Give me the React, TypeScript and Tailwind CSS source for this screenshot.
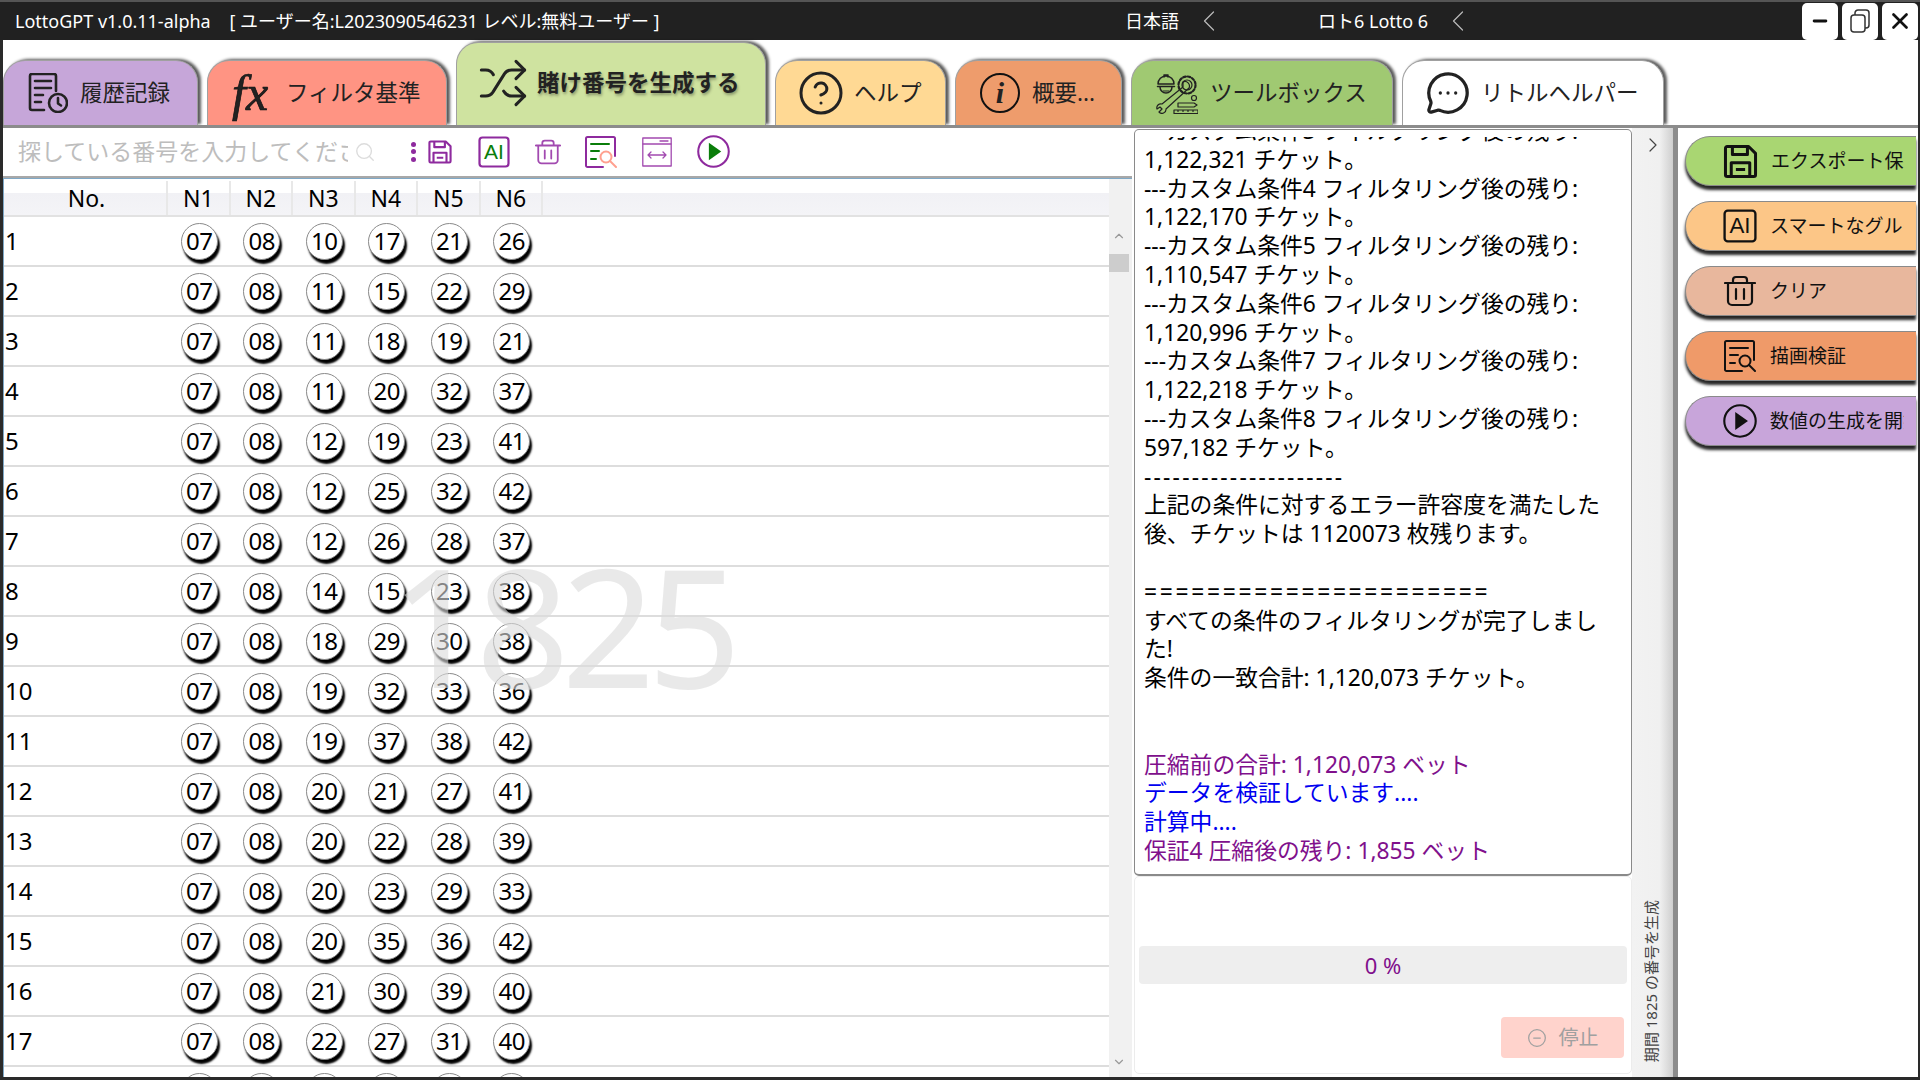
// LottoGPT ticket generator window.
import { ChevronLeft, ChevronRight, ChevronUp, ChevronDown, CircleHelp, MessageCircleMore, Minus, MinusCircle, Search, Shuffle, X } from 'lucide-react'

const ROWS = [
  ['07', '08', '10', '17', '21', '26'],
  ['07', '08', '11', '15', '22', '29'],
  ['07', '08', '11', '18', '19', '21'],
  ['07', '08', '11', '20', '32', '37'],
  ['07', '08', '12', '19', '23', '41'],
  ['07', '08', '12', '25', '32', '42'],
  ['07', '08', '12', '26', '28', '37'],
  ['07', '08', '14', '15', '23', '38'],
  ['07', '08', '18', '29', '30', '38'],
  ['07', '08', '19', '32', '33', '36'],
  ['07', '08', '19', '37', '38', '42'],
  ['07', '08', '20', '21', '27', '41'],
  ['07', '08', '20', '22', '28', '39'],
  ['07', '08', '20', '23', '29', '33'],
  ['07', '08', '20', '35', '36', '42'],
  ['07', '08', '21', '30', '39', '40'],
  ['07', '08', '22', '27', '31', '40'],
  ['07', '08', '22', '27', '32', '33'],
]

const LOG: [string, string?][] = [
  ['---カスタム条件3 フィルタリング後の残り:'],
  ['1,122,321 チケット。'],
  ['---カスタム条件4 フィルタリング後の残り:'],
  ['1,122,170 チケット。'],
  ['---カスタム条件5 フィルタリング後の残り:'],
  ['1,110,547 チケット。'],
  ['---カスタム条件6 フィルタリング後の残り:'],
  ['1,120,996 チケット。'],
  ['---カスタム条件7 フィルタリング後の残り:'],
  ['1,122,218 チケット。'],
  ['---カスタム条件8 フィルタリング後の残り:'],
  ['597,182 チケット。'],
  ['---------------------', 'tracking-[2.200px]'],
  ['上記の条件に対するエラー許容度を満たした'],
  ['後、チケットは 1120073 枚残ります。'],
  ['\u00a0'],
  ['======================', 'tracking-[2.700px]'],
  ['すべての条件のフィルタリングが完了しまし'],
  ['た!'],
  ['条件の一致合計: 1,120,073 チケット。'],
  ['\u00a0'],
  ['\u00a0'],
  ['圧縮前の合計: 1,120,073 ベット', 'text-[#80108c]'],
  ['データを検証しています....', 'text-[#0000f0]'],
  ['計算中....', 'text-[#0000f0]'],
  ['保証4 圧縮後の残り: 1,855 ベット', 'text-[#80108c]'],
]

function SaveIcon({ className }: { className?: string }) {
  return (
    <svg viewBox="0 0 32 32" fill="none" stroke="currentColor" strokeWidth="2.6" strokeLinejoin="round" className={className}>
      <path d="M3 4.5A1.5 1.5 0 0 1 4.5 3H23l6 6v18.5a1.5 1.5 0 0 1-1.5 1.5h-23A1.5 1.5 0 0 1 3 27.5z" />
      <path d="M9 3v7h13V3M8 29V17h16v12M12 23h8" />
    </svg>
  )
}

function AiIcon({ className, accent }: { className?: string; accent?: string }) {
  return (
    <svg viewBox="0 0 32 32" fill="none" className={className}>
      <rect x="1.5" y="1.5" width="29" height="29" rx="3" stroke="currentColor" strokeWidth="2.2" />
      <text x="16" y="23" textAnchor="middle" fontSize="21" fontFamily="Liberation Sans" fill={accent ?? 'currentColor'}>AI</text>
    </svg>
  )
}

function TrashIcon({ className }: { className?: string }) {
  return (
    <svg viewBox="0 0 32 32" fill="none" stroke="currentColor" strokeWidth="2.2" strokeLinecap="round" strokeLinejoin="round" className={className}>
      <path d="M1 8h30M9 8V5a3 3 0 0 1 3-3h8a3 3 0 0 1 3 3v3M4 8v18a4 4 0 0 0 4 4h16a4 4 0 0 0 4-4V8M12 14v10M20 14v10" />
    </svg>
  )
}

function ReportIcon({ className, accent, lens }: { className?: string; accent?: string; lens?: string }) {
  return (
    <svg viewBox="0 0 32 32" fill="none" strokeWidth="2" strokeLinecap="round" className={className}>
      <path d="M30 20V2.5A1.5 1.5 0 0 0 28.500 1H2.500A1.500 1.500 0 0 0 1 2.500v27A1.500 1.500 0 0 0 2.500 31H18" stroke="currentColor" />
      <path d="M6 8h18M6 15h8M6 23h5" stroke={accent ?? 'currentColor'} />
      <circle cx="21" cy="21" r="5.500" stroke={lens ?? 'currentColor'} />
      <path d="M25 25l6 6" stroke={lens ?? 'currentColor'} />
    </svg>
  )
}

function PlayIcon({ className, accent }: { className?: string; accent?: string }) {
  return (
    <svg viewBox="0 0 32 32" fill="none" className={className}>
      <circle cx="16" cy="16" r="14.800" stroke="currentColor" strokeWidth="2" />
      <path d="M11.500 7.500v17l12-8.500z" fill={accent ?? 'currentColor'} />
    </svg>
  )
}

function WidthIcon({ className }: { className?: string }) {
  return (
    <svg viewBox="0 0 30 30" fill="none" stroke="currentColor" strokeWidth="1.300" strokeLinecap="round" strokeLinejoin="round" className={className}>
      <rect x="0.800" y="1" width="28.400" height="28" />
      <path d="M1 7h28M18 4h8M6 18h18M9 15l-3 3 3 3M21 15l3 3-3 3" />
    </svg>
  )
}

function HistoryIcon() {
  return (
    <svg viewBox="0 0 40 40" fill="none" stroke="currentColor" strokeWidth="2.600" strokeLinecap="round" strokeLinejoin="round" className="h-[40px] w-[40px] shrink-0">
      <path d="M16 37H4a2 2 0 0 1-2-2V3a2 2 0 0 1 2-2h22a2 2 0 0 1 2 2v15" />
      <path d="M7 8h16M7 15h16M7 22h8M7 29h6" />
      <circle cx="30" cy="30" r="9" />
      <path d="M30 25v5.500l3 2" />
    </svg>
  )
}

// worker's helmet, spanner through a gear, pen and ruler
function ToolsIcon() {
  return (
    <svg viewBox="0 0 42 42" fill="none" stroke="currentColor" strokeWidth="1.200" strokeLinecap="round" strokeLinejoin="round" className="h-[42px] w-[42px] shrink-0">
      <path d="M2 12a8 8 0 0 1 16 0zM8 5V3h4v2M1.500 14.500h17M4 15a6 6 0 0 0 12 0" strokeWidth="1.500" />
      <path d="M7 19h6" />
      <circle cx="31" cy="13" r="8.500" strokeDasharray="2.500 2" strokeWidth="2.200" />
      <circle cx="31" cy="13" r="5" />
      <path d="M27 10a4.500 4.500 0 0 1 6 6L10 37a4 4 0 0 1-7 3l3-3-2-2-3 2a4 4 0 0 1 5-5l21-17z" />
      <circle cx="38" cy="26" r="2.500" />
      <path d="M22 31h16l3 2-3 2H22zM18 38h24v3.500H18zM22 38v1.500M27 38v1.500M32 38v1.500M37 38v1.500" />
    </svg>
  )
}

function Ball({ value }: { value: string }) {
  return (
    <div className="flex h-[37px] w-[37px] items-center justify-center rounded-full border border-[#8a8a8a] bg-white text-[24px] leading-none tracking-[-0.5px] shadow-[2px_4px_2px_#000]">
      {value}
    </div>
  )
}

function Tab({ width, color, active, icon, label }: { width: string; color: string; active?: boolean; icon: React.ReactNode; label: string }) {
  return (
    <div
      className={`flex ${width} ${color} ${active ? 'h-[83px] pb-[3px] font-bold [text-shadow:1px_2px_3px_rgba(0,0,0,0.35)]' : 'h-[65px] pb-[1px]'} shrink-0 items-center gap-[12px] rounded-t-[22px] border border-b-0 border-[#a0a0a0] pl-[24px] text-[22.500px] text-[#222] shadow-[3px_-1px_3px_rgba(0,0,0,0.65)]`}
    >
      {icon}
      <span className="whitespace-nowrap">{label}</span>
    </div>
  )
}

function SideButton({ color, icon, label }: { color: string; icon: React.ReactNode; label: string }) {
  return (
    <div className={`flex h-[50px] ${color} items-center gap-[14px] rounded-l-[25px] border border-r-0 border-[#8a8a8a] pl-[38px] pr-[12px] text-[19px] text-[#111] shadow-[0_4px_3px_rgba(0,0,0,0.85)]`}>
      {icon}
      <span className="overflow-hidden whitespace-nowrap">{label}</span>
    </div>
  )
}

function WindowButton({ children }: { children: React.ReactNode }) {
  return <div className="flex h-[37px] w-[36px] items-center justify-center rounded-[5px] bg-white text-[#111]">{children}</div>
}

export default function App() {
  return (
    <div className="flex h-[1080px] w-[1920px] flex-col overflow-hidden bg-[#2a2a2a] pb-[3px] pl-[3px] pr-[2px] font-['Noto_Sans','Noto_Sans_CJK_JP',sans-serif] text-black">
      {/* title bar */}
      <div className="-ml-[3px] -mr-[2px] flex h-[40px] shrink-0 items-center justify-between border-t-2 border-[#555] bg-[#212121] pl-[15px] pr-[2px] text-[18px] text-white">
        <div className="w-[1110px] whitespace-pre">LottoGPT v1.0.11-alpha    [ ユーザー名:L2023090546231 レベル:無料ユーザー ]</div>
        <div className="flex w-[155px] items-center gap-[12px]">
          <span>日本語</span>
          <ChevronLeft size={36} strokeWidth={0.800} className="text-[#bbb]" />
        </div>
        <div className="ml-[38px] flex w-[200px] items-center gap-[12px]">
          <span>ロト6 Lotto 6</span>
          <ChevronLeft size={36} strokeWidth={0.800} className="text-[#bbb]" />
        </div>
        <div className="ml-auto flex items-center gap-[4px]">
          <WindowButton><Minus size={20} strokeWidth={3.500} /></WindowButton>
          <WindowButton>
            <svg viewBox="0 0 22 24" fill="none" stroke="#333" strokeWidth="1.500" className="h-[24px] w-[22px]">
              <rect x="2" y="6" width="14" height="17" rx="3" />
              <path d="M6 6V4a3 3 0 0 1 3-3h8a3 3 0 0 1 3 3v12a3 3 0 0 1-3 3h-1" />
            </svg>
          </WindowButton>
          <WindowButton><X size={26} strokeWidth={2.500} /></WindowButton>
        </div>
      </div>

      {/* tabs */}
      <div className="flex h-[85px] shrink-0 items-end gap-[9px] bg-white">
        <Tab width="w-[195px]" color="bg-[#c6a6d9]" icon={<HistoryIcon />} label="履歴記録" />
        <Tab width="w-[240px]" color="bg-[#ff9483]" icon={<span className="w-[42px] font-['Liberation_Serif',serif] text-[50px] italic leading-none [-webkit-text-stroke:0.700px_#111]">fx</span>} label="フィルタ基準" />
        <Tab width="w-[310px]" color="bg-[#cfe3a0]" active icon={<Shuffle size={52} strokeWidth={1.400} className="-mx-[4px] shrink-0" />} label="賭け番号を生成する" />
        <Tab width="w-[171px]" color="bg-[#ffd994]" icon={<CircleHelp size={48} strokeWidth={1.500} className="-mx-[3px] shrink-0" />} label="ヘルプ" />
        <Tab width="w-[167px]" color="bg-[#ee9c6c]" icon={<span className="flex h-[40px] w-[40px] items-center justify-center rounded-full border-2 border-[#111] font-['Liberation_Serif',serif] text-[30px] font-bold italic leading-none">i</span>} label="概要..." />
        <Tab width="w-[262px]" color="bg-[#a0c972]" icon={<ToolsIcon />} label="ツールボックス" />
        <Tab width="w-[262px]" color="bg-white" icon={<MessageCircleMore size={46} strokeWidth={1.700} className="-mx-[2px] shrink-0" />} label="リトルヘルパー" />
      </div>

      {/* body */}
      <div className="flex min-h-0 flex-1 border-t-[3px] border-[#8c8c8c] bg-white">
        {/* left: search + table */}
        <div className="flex w-[1129px] shrink-0 flex-col">
          <div className="flex h-[50px] shrink-0 items-center border-b-2 border-[#a8a8a8] pb-[1px] pl-[15px]">
            <div className="w-[330px] overflow-hidden whitespace-nowrap text-[23px] text-[#bdbdbd]">探している番号を入力してください</div>
            <Search size={22} strokeWidth={1.500} className="ml-[6px] text-[#dcdcdc]" />
            <div className="ml-[35px] flex h-[20px] flex-col justify-between">
              <span className="h-[5px] w-[5px] rounded-full bg-[#8e2a9e]" />
              <span className="h-[5px] w-[5px] rounded-full bg-[#8e2a9e]" />
              <span className="h-[5px] w-[5px] rounded-full bg-[#8e2a9e]" />
            </div>
            <SaveIcon className="ml-[11px] h-[26px] w-[26px] text-[#8e2a9e]" />
            <AiIcon className="ml-[25px] h-[32px] w-[32px] text-[#8e2a9e]" accent="#0a7d0a" />
            <TrashIcon className="ml-[25px] h-[26px] w-[26px] text-[#a24ab0]" />
            <ReportIcon className="ml-[24px] h-[32px] w-[32px] text-[#8e2a9e]" accent="#0a7d0a" lens="#ffa08f" />
            <WidthIcon className="ml-[25px] h-[30px] w-[30px] text-[#a24ab0]" />
            <PlayIcon className="ml-[25px] h-[33px] w-[33px] text-[#8e2a9e]" accent="#0a7d0a" />
          </div>

          <div className="flex min-h-0 flex-1 border-l border-t border-[#7fa8c6]">
            <div className="relative min-w-0 flex-1 overflow-hidden">
              <div className="flex h-[38px] border-b-2 border-[#e2e2e2] bg-[linear-gradient(#fff_0%,#fff_40%,#f1f1f5_40%,#f4f4f7_100%)] pt-[2px] text-[23px]">
                <div className="flex w-[164px] items-center justify-center border-r-2 border-[#e8e8e8] pl-[3px]">No.</div>
                {['N1', 'N2', 'N3', 'N4', 'N5', 'N6'].map(h => (
                  <div key={h} className="flex w-[62.500px] items-center justify-center border-r-2 border-[#e8e8e8]">{h}</div>
                ))}
              </div>
              {ROWS.map((row, i) => (
                <div key={i} className="flex h-[50px] items-center border-b-2 border-[#dddddd] text-[24px]">
                  <div className="w-[164px] pl-[1px]">{i + 1}</div>
                  {row.map((n, j) => (
                    <div key={j} className="flex w-[62.500px] justify-center"><Ball value={n} /></div>
                  ))}
                </div>
              ))}
              <div className="pointer-events-none absolute left-[386px] top-[364px] text-[164px] leading-none tracking-[-8px] text-[#dcdcdc] opacity-60">1825</div>
            </div>
            <div className="flex w-[23px] shrink-0 flex-col items-center bg-[#f1f1f1] pr-[3px] pt-[50px] text-[#999]">
              <ChevronUp size={14} />
              <div className="mt-[11px] h-[18px] w-full bg-[#cdcdcd]" />
              <ChevronDown size={14} className="mb-[8px] mt-auto" />
            </div>
          </div>
        </div>

        {/* log */}
        <div className="ml-[2px] flex w-[498px] shrink-0 flex-col">
          <div className="mt-[1px] h-[747px] shrink-0 rounded-[5px] border border-b-2 border-[#8a8a8a] px-[9px] pt-[7px]">
            <div className="h-full overflow-hidden">
              <div className="-mt-[20px] text-[22.800px] leading-[28.800px]">
                {LOG.map(([text, cls], i) => (
                  <div key={i} className={`whitespace-nowrap ${cls ?? ''}`}>{text}</div>
                ))}
              </div>
            </div>
          </div>
          <div className="mb-[3px] flex min-h-0 flex-1 flex-col rounded-[5px] border border-[#ececec] px-[4px]">
            <div className="mt-[69px] flex h-[38px] items-center justify-center rounded-[4px] bg-[#eeeeee] text-[22px] text-[#80108c]">0 %</div>
            <div className="ml-auto mr-[3px] mt-[33px] flex h-[41px] w-[123px] items-center justify-center gap-[12px] rounded-[4px] bg-[#ffd3cc] text-[20px] text-[#a0a0a0]">
              <MinusCircle size={20} strokeWidth={1.500} />
              停止
            </div>
          </div>
        </div>

        {/* collapse strip */}
        <div className="flex w-[46px] shrink-0 flex-col items-start bg-[linear-gradient(90deg,#f2f2f2_0%,#f0f0f0_60%,#d0d0d0_88%,#8c8c8c_90%,#8c8c8c_100%)] pb-[15px] pt-[5px]">
          <ChevronRight size={24} strokeWidth={1.200} className="ml-[9px] text-[#444]" />
          <span className="ml-[12px] mt-auto rotate-180 whitespace-nowrap text-[15px] leading-none text-[#444] [text-orientation:sideways] [writing-mode:vertical-rl]">期間 1825 の番号を生成</span>
        </div>

        {/* actions */}
        <div className="flex min-w-0 flex-1 flex-col gap-[15px] overflow-hidden pl-[7px] pr-[2px] pt-[8px]">
          <SideButton color="bg-[#a9d672]" icon={<SaveIcon className="-mx-[2px] h-[37px] w-[37px] shrink-0" />} label="エクスポート保存" />
          <SideButton color="bg-[#fcc687]" icon={<AiIcon className="-mx-[1px] h-[34px] w-[34px] shrink-0" />} label="スマートなグループ化" />
          <SideButton color="bg-[#e8b79d]" icon={<TrashIcon className="h-[32px] w-[32px] shrink-0" />} label="クリア" />
          <SideButton color="bg-[#ef9a69]" icon={<ReportIcon className="h-[32px] w-[32px] shrink-0" />} label="描画検証" />
          <SideButton color="bg-[#c8a5da]" icon={<PlayIcon className="-mx-[1px] h-[34px] w-[34px] shrink-0" />} label="数値の生成を開始" />
        </div>
      </div>
    </div>
  )
}
